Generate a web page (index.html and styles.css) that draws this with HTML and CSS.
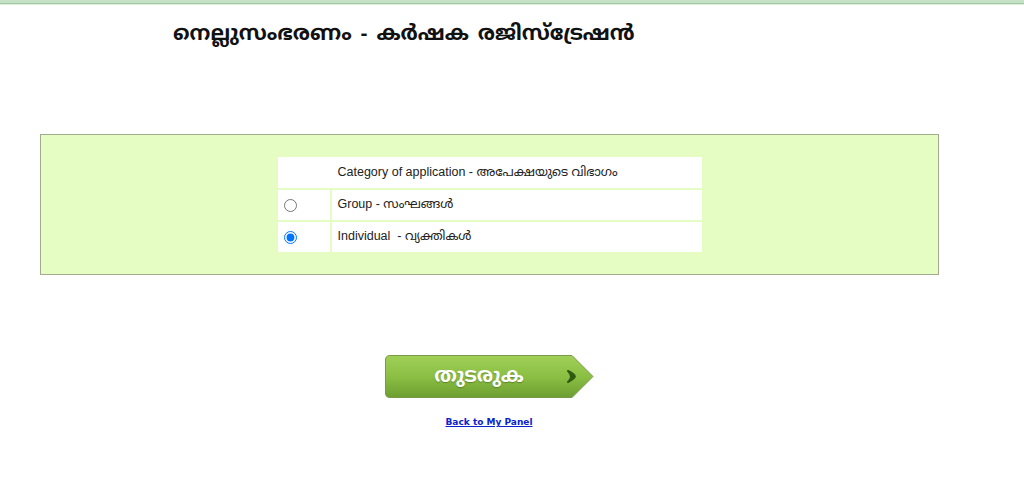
FILE: index.html
```html
<!DOCTYPE html>
<html lang="ml">
<head>
<meta charset="utf-8">
<title>നെല്ലുസംഭരണം</title>
<link rel="stylesheet" href="styles.css">
</head>
<body>
<div class="topbar"></div>
<h1 class="title">നെല്ലുസംഭരണം - കർഷക രജിസ്ട്രേഷൻ</h1>
<div class="panel">
  <table class="cat">
    <tr>
      <td class="head" colspan="2">Category of application - അപേക്ഷയുടെ വിഭാഗം</td>
    </tr>
    <tr>
      <td class="c1"><input type="radio" name="cat" class="rad"></td>
      <td class="c2">Group - സംഘങ്ങൾ</td>
    </tr>
    <tr>
      <td class="c1"><input type="radio" name="cat" class="rad" checked></td>
      <td class="c2">Individual &nbsp;- വ്യക്തികൾ</td>
    </tr>
  </table>
</div>
<div class="actions">
  <div class="btn">
    <svg class="btn-bg" width="209" height="43" viewBox="0 0 209 43">
      <defs>
        <linearGradient id="g" x1="0" y1="0" x2="0" y2="1">
          <stop offset="0" stop-color="#a0cf58"/>
          <stop offset="0.5" stop-color="#8bbf44"/>
          <stop offset="1" stop-color="#6c9f30"/>
        </linearGradient>
      </defs>
      <path d="M5 0.5 H187 L208 21.5 L187 42.5 H5 Q0.5 42.5 0.5 38 V5 Q0.5 0.5 5 0.5 Z" fill="url(#g)" stroke="#7a9a4a" stroke-width="1"/>
      <path d="M183 16 Q189 19 190 21.5 Q189 24 183 27 Q186 24 186 21.5 Q186 19 183 16 Z" fill="#2f5a12" stroke="#2f5a12" stroke-width="2" stroke-linejoin="round"/>
    </svg>
    <span class="btn-text">തുടരുക</span>
  </div>
  <a class="back" href="#">Back to My Panel</a>
</div>
</body>
</html>
```
FILE: styles.css
```css
html, body {
  margin: 0;
  padding: 0;
  background: #ffffff;
  font-family: "Liberation Sans", Arial, "Noto Sans Malayalam", sans-serif;
}
.topbar {
  height: 5px;
  background: linear-gradient(to bottom, #c6e2c6 0, #c6e2c6 3px, #a6c6a6 3px, #a6c6a6 4px, #dcefdc 4px, #dcefdc 5px);
}
.title {
  margin: 0;
  padding: 14px 0 0 173px;
  height: 129px;
  box-sizing: border-box;
  font-size: 21px;
  font-weight: bold;
  letter-spacing: 0;
  word-spacing: 3px;
  color: #111;
  line-height: 27px;
}
.panel {
  margin-left: 40px;
  width: 899px;
  height: 141px;
  box-sizing: border-box;
  border: 1px solid #a3ab8f;
  background: #e5fcc2;
  padding-top: 20px;
}
.cat {
  margin: 0 auto;
  border-collapse: separate;
  border-spacing: 2px;
  width: 428px;
}
.cat td {
  background: #ffffff;
  height: 30px;
  padding: 0;
  font-size: 12.5px;
  color: #222;
}
.cat .head {
  height: 31px;
  padding-left: 60px;
}
.cat .c1 {
  width: 52px;
  text-align: left;
}
.cat .c2 {
  padding-left: 6px;
}
.rad {
  margin: 0 0 0 6px;
  width: 13px;
  height: 13px;
  vertical-align: middle;
}
.actions {
  display: flex;
  flex-direction: column;
  align-items: center;
  margin-top: 80px;
  margin-left: -46px;
}
.btn {
  position: relative;
  width: 209px;
  height: 43px;
  display: flex;
  align-items: center;
  justify-content: center;
}
.btn-bg {
  position: absolute;
  left: 0;
  top: 0;
}
.btn-text {
  position: relative;
  margin-left: -20px;
  color: #ffffff;
  font-size: 20px;
  font-weight: bold;
  text-shadow: 0 1px 1px rgba(60, 90, 20, 0.5);
}
.back {
  margin-top: 19px;
  font-family: "DejaVu Sans", Verdana, sans-serif;
  font-size: 9px;
  font-weight: bold;
  color: #0b24c9;
  text-decoration: underline;
}
```
